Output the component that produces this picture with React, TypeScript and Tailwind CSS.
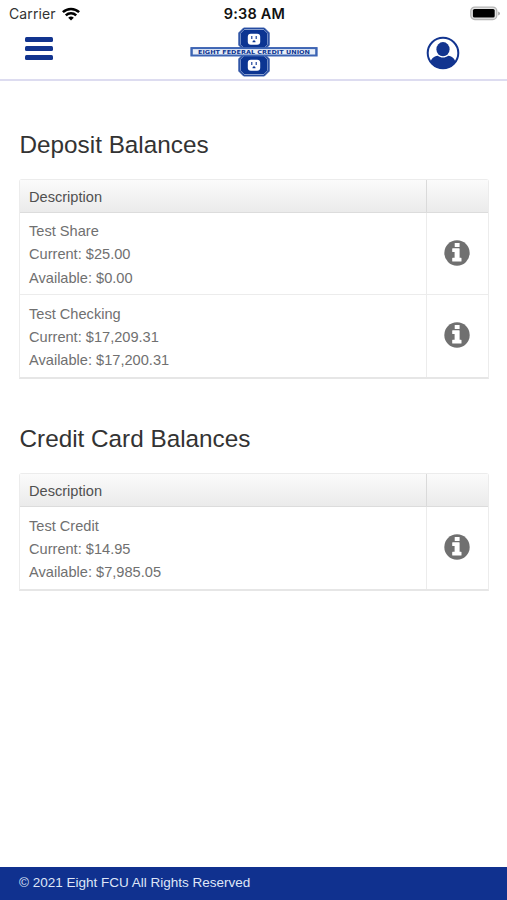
type Account = {
  name: string;
  current: string;
  available: string;
};

const deposits: Account[] = [
  { name: 'Test Share', current: '$25.00', available: '$0.00' },
  { name: 'Test Checking', current: '$17,209.31', available: '$17,200.31' },
];

const creditCards: Account[] = [{ name: 'Test Credit', current: '$14.95', available: '$7,985.05' }];

const WifiIcon = () => (
  <svg className="h-[14px] w-[18px]" viewBox="0 0 18 14" fill="none" stroke="#000" strokeWidth="2.5">
    <path d="M0.9 5.2a11.6 11.6 0 0 1 16.2 0" />
    <path d="M3.8 8.3a7.5 7.5 0 0 1 10.4 0" />
    <path d="M9 13.6 6.2 10.8a4 4 0 0 1 5.6 0z" fill="#000" stroke="none" />
  </svg>
);

const BatteryIcon = () => (
  <svg className="h-[15px] w-[31px]" viewBox="0 0 31 15">
    <rect x="0.8" y="1.1" width="26" height="12.4" rx="4" fill="#e4e4e4" stroke="#b5b5b5" strokeWidth="1.3" />
    <rect x="2.9" y="3" width="21.8" height="8.6" rx="1.6" fill="#000" />
    <path d="M28.1 5.4c1.5.5 1.9 1.2 1.9 2s-.4 1.5-1.9 2z" fill="#a8a8a8" />
  </svg>
);

const Outlet = ({ y }: { y: number }) => (
  <g transform={`translate(0 ${y})`}>
    <path d="M53.6 0.5h20.8l4.8 4.8v12.4l-4.8 4.8H53.6l-4.8-4.8V5.3z" fill="#0c3592" stroke="#3f62ae" />
    <path d="M54.2 2h19.6l3.9 3.9v11.2l-3.9 3.9H54.2l-3.9-3.9V5.9z" fill="none" stroke="#a9bce0" strokeWidth="0.8" />
    <rect x="57.8" y="6.2" width="12.4" height="11" rx="3" fill="#fff" />
    <path d="M61.8 8.4v3.2M66.2 8.4v3.2" stroke="#0c3592" strokeWidth="1.1" />
    <path d="M62.5 14.8v-.5a1.5 1.5 0 0 1 3 0v.5z" fill="#0c3592" />
  </g>
);

const Logo = () => (
  <svg className="h-[51px] w-[128px]" viewBox="0 0 128 51" role="img" aria-label="Eight Federal Credit Union">
    <Outlet y={0.5} />
    <Outlet y={26.5} />
    <rect x="0.9" y="20.6" width="126.2" height="8.4" fill="#3d66b5" stroke="#3d63b2" strokeWidth="1" />
    <rect x="2.8" y="22.1" width="122.4" height="5.4" fill="#e8eef8" />
    <text
      x="8"
      y="26.8"
      textLength="112"
      lengthAdjust="spacingAndGlyphs"
      className="fill-[#0c3592] font-['DejaVu_Sans'] text-[5.4px] font-bold"
    >
      EIGHT FEDERAL CREDIT UNION
    </text>
  </svg>
);

const UserIcon = () => (
  <svg className="h-[34px] w-[34px]" viewBox="0 0 34 34">
    <clipPath id="user-clip">
      <circle cx="17" cy="17" r="15.5" />
    </clipPath>
    <circle cx="17" cy="17" r="15.3" fill="#fff" stroke="#12348f" strokeWidth="2" />
    <g clipPath="url(#user-clip)" fill="#12348f">
      <ellipse cx="17" cy="13.2" rx="6.6" ry="7.1" />
      <path d="M4.6 28v-1.5c.3-3.6 3-6.2 7.2-6.8 3 2.4 7.4 2.4 10.4 0 4.2.6 6.9 3.2 7.2 6.8V34H4.6z" />
    </g>
  </svg>
);

const InfoIcon = () => (
  <svg className="h-[26px] w-[26px]" viewBox="0 0 26 26">
    <circle cx="13" cy="13" r="12.7" fill="#707070" />
    <g fill="#fff">
      <rect x="10.7" y="3" width="4.9" height="3.9" rx="0.5" />
      <path d="M8.7 8.2h6.4q.5 0 .5.5v9.1h1.4q.5 0 .5.5v2.8q0 .5-.5.5H8.7q-.5 0-.5-.5v-2.8q0-.5.5-.5h1.9v-5.8H8.7q-.5 0-.5-.5V8.7q0-.5.5-.5z" />
    </g>
  </svg>
);

const BalanceTable = ({ title, accounts }: { title: string; accounts: Account[] }) => (
  <section>
    <h2 className="pl-[0.5px] text-[24.3px] leading-[30px] whitespace-nowrap text-[#333]">{title}</h2>
    <div className="mt-[19px] rounded-t-[3px] border border-b-2 border-[#ececec] border-b-[#e6e6e6] text-[14.6px] text-[#707070]">
      <div className="grid h-[33px] grid-cols-[406px_1fr] border-b border-[#dcdcdc] bg-linear-to-b from-[#fbfbfb] to-[#ebebeb] text-[#505050]">
        <div className="flex items-center pt-[4px] pl-[9px]">Description</div>
        <div className="border-l border-[#dadada]" />
      </div>
      {accounts.map((account) => (
        <div
          key={account.name}
          className="grid grid-cols-[406px_1fr] border-b border-[#ececec] last:border-b-0"
        >
          <div className="h-[81.6px] pt-[7.6px] pl-[9px] leading-[23.35px]">
            <p>{account.name}</p>
            <p>Current: {account.current}</p>
            <p>Available: {account.available}</p>
          </div>
          <button
            className="flex items-center justify-center border-l border-[#ececec] pr-px pb-px"
            type="button"
            aria-label="Details"
          >
            <InfoIcon />
          </button>
        </div>
      ))}
    </div>
  </section>
);

const App = () => {
  return (
    <div className="flex h-[900px] w-[507px] flex-col bg-white font-['Liberation_Sans',sans-serif]">
      <header className="h-[80.5px] border-b-2 border-[#dddcf0]">
        <div className="grid h-[27px] grid-cols-3 items-center pr-[6px] pl-[9px] font-['Inter',sans-serif] text-black">
          <div className="flex items-center gap-[6px] text-[14px] tracking-[0.1px] text-[#333]">
            Carrier
            <WifiIcon />
          </div>
          <div className="pr-px text-center text-[14.5px] font-semibold tracking-[0.2px] text-[#111]">9:38 AM</div>
          <div className="flex justify-end">
            <BatteryIcon />
          </div>
        </div>
        <div className="grid grid-cols-[1fr_128px_1fr] items-start pr-[47px] pl-[25px]">
          <button className="mt-[10px] flex w-[28px] flex-col gap-[4px]" type="button" aria-label="Menu">
            <span className="h-[5px] w-full rounded-[1.5px] bg-[#12348f]" />
            <span className="h-[5px] w-full rounded-[1.5px] bg-[#12348f]" />
            <span className="h-[5px] w-full rounded-[1.5px] bg-[#12348f]" />
          </button>
          <div className="ml-[11px] w-[128px]">
            <Logo />
          </div>
          <button className="mt-[8.5px] justify-self-end" type="button" aria-label="Profile">
            <UserIcon />
          </button>
        </div>
      </header>

      <main className="flex flex-1 flex-col gap-[45.5px] pt-[49px] pr-[18.5px] pl-[19px]">
        <BalanceTable title="Deposit Balances" accounts={deposits} />
        <BalanceTable title="Credit Card Balances" accounts={creditCards} />
      </main>

      <footer className="flex h-[33px] items-center bg-[#10318f] pl-[19px] text-[13.5px] text-[#dfe6f7]">
        © 2021 Eight FCU All Rights Reserved
      </footer>
    </div>
  );
};

export default App;
